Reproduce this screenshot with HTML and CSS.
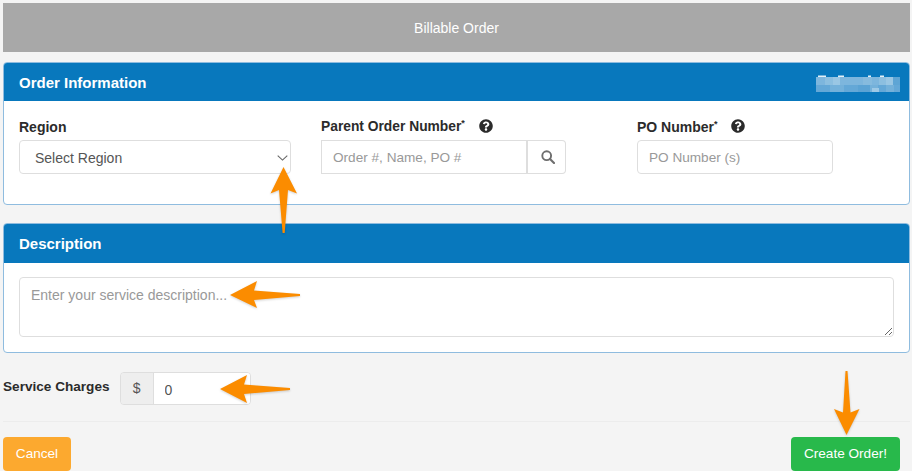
FILE: index.html
```html
<!DOCTYPE html>
<html lang="en">
<head>
<meta charset="utf-8">
<title>Billable Order</title>
<link rel="stylesheet" href="styles.css">
</head>
<body>
<header class="topbar">Billable Order</header>

<section class="panel panel-order">
  <div class="panel-head">
    <h2>Order Information</h2>
    <svg class="blur" width="84" height="19" viewBox="0 0 84 19" aria-hidden="true">
      <g fill="#e4f0f8"><rect x="2" y="1.5" width="8" height="1.5"/><rect x="22" y="1.5" width="6" height="1.5"/><rect x="52" y="1.5" width="3" height="1.5"/><rect x="64" y="1.5" width="4" height="1.5"/></g>
      <g fill="#7db6dd"><rect x="0" y="3" width="84" height="8"/></g>
      <g fill="#8cbfe0"><rect x="9" y="3" width="8" height="8"/><rect x="17" y="3" width="7" height="8" fill="#9ac7e4"/><rect x="47" y="3" width="9" height="8" fill="#86bbde"/><rect x="63" y="3" width="7" height="8"/><rect x="70" y="3" width="7" height="8" fill="#9ac7e4"/><rect x="77" y="3" width="7" height="8" fill="#5ea5d5"/></g>
      <g fill="#64a8d7"><rect x="0" y="11" width="84" height="7"/></g>
      <g fill="#74b1da"><rect x="14" y="11" width="14" height="7"/><rect x="42" y="11" width="12" height="7" fill="#5ba3d4"/><rect x="54" y="11" width="8" height="7"/><rect x="56" y="14" width="7" height="4" fill="#9dc9e6"/><rect x="70" y="11" width="8" height="7"/></g>
    </svg>
  </div>
  <div class="order-grid">
    <div class="field">
      <label class="label">Region</label>
      <div class="select-wrap">
        <select class="control select"><option>Select Region</option></select>
        <svg class="chevron" width="11" height="6" viewBox="0 0 11 6" aria-hidden="true"><path d="M.7.7l4.8 4.4L10.3.7" fill="none" stroke="#666" stroke-width="1.1"/></svg>
      </div>
    </div>
    <div class="field">
      <label class="label label-tight">Parent Order Number<sup>*</sup>
        <svg class="help" viewBox="0 0 512 512" aria-hidden="true"><path d="M504 256c0 136.997-111.043 248-248 248S8 392.997 8 256C8 119.083 119.043 8 256 8s248 111.083 248 248zM262.655 90c-54.497 0-89.255 22.957-116.549 63.758-3.536 5.286-2.353 12.415 2.715 16.258l34.699 26.31c5.205 3.947 12.621 3.008 16.665-2.122 17.864-22.658 30.113-35.797 57.303-35.797 20.429 0 45.698 13.148 45.698 32.958 0 14.976-12.363 22.667-32.534 33.976C247.128 238.528 216 254.941 216 296v4c0 6.627 5.373 12 12 12h56c6.627 0 12-5.373 12-12v-1.333c0-28.462 83.186-29.647 83.186-106.667 0-58.002-60.165-102-116.531-102zM256 338c-25.365 0-46 20.635-46 46 0 25.364 20.635 46 46 46s46-20.636 46-46c0-25.365-20.635-46-46-46z"/></svg>
      </label>
      <div class="search-group">
        <input class="control search-input" placeholder="Order #, Name, PO #">
        <button class="search-btn" type="button" aria-label="Search">
          <svg width="14" height="14" viewBox="0 0 14 14" aria-hidden="true"><circle cx="5.7" cy="5.7" r="4.4" fill="none" stroke="#6e6e6e" stroke-width="1.9"/><path d="M9 9l4 4" stroke="#6e6e6e" stroke-width="2.2" stroke-linecap="round"/></svg>
        </button>
      </div>
    </div>
    <div class="field">
      <label class="label">PO Number<sup>*</sup>
        <svg class="help help-po" viewBox="0 0 512 512" aria-hidden="true"><path d="M504 256c0 136.997-111.043 248-248 248S8 392.997 8 256C8 119.083 119.043 8 256 8s248 111.083 248 248zM262.655 90c-54.497 0-89.255 22.957-116.549 63.758-3.536 5.286-2.353 12.415 2.715 16.258l34.699 26.31c5.205 3.947 12.621 3.008 16.665-2.122 17.864-22.658 30.113-35.797 57.303-35.797 20.429 0 45.698 13.148 45.698 32.958 0 14.976-12.363 22.667-32.534 33.976C247.128 238.528 216 254.941 216 296v4c0 6.627 5.373 12 12 12h56c6.627 0 12-5.373 12-12v-1.333c0-28.462 83.186-29.647 83.186-106.667 0-58.002-60.165-102-116.531-102zM256 338c-25.365 0-46 20.635-46 46 0 25.364 20.635 46 46 46s46-20.636 46-46c0-25.365-20.635-46-46-46z"/></svg>
      </label>
      <input class="control po-input" placeholder="PO Number (s)">
    </div>
  </div>
</section>

<section class="panel panel-desc">
  <div class="panel-head"><h2>Description</h2></div>
  <div class="desc-body">
    <textarea class="control desc-text" placeholder="Enter your service description..."></textarea>
  </div>
</section>

<div class="charges">
  <span class="charges-label">Service Charges</span>
  <div class="money">
    <span class="money-addon">$</span>
    <input class="money-input" value="0">
  </div>
</div>

<footer class="actions">
  <button class="btn btn-cancel" type="button">Cancel</button>
  <button class="btn btn-create" type="button">Create Order!</button>
</footer>

<svg class="arrows" width="912" height="471" viewBox="0 0 912 471" aria-hidden="true">
  <path d="M283.5 167L297 193.5L288 190L284.7 233H282.6L279 190L270.5 193.5Z"/>
  <path d="M230 295L257 281L254 290.5L300 294V296L254 300L257 308Z"/>
  <path d="M220 389L247 375L244 384.5L290 388V390L244 394L247 403Z"/>
  <path d="M846.5 435L834 409L843 412.5L845.5 371H847.5L850.5 412.5L859.5 409Z"/>
</svg>
</body>
</html>
```

FILE: styles.css
```css
* { box-sizing: border-box; }

html, body { height: 100%; }

body {
  position: relative;
  margin: 0;
  padding: 3px 2px 0 3px;
  overflow: hidden;
  background: #f4f4f4;
  color: #333;
  font: 14px/20px "Liberation Sans", Arial, sans-serif;
}

.topbar {
  height: 49px;
  background: #a8a8a8;
  color: #fff;
  display: flex;
  align-items: center;
  justify-content: center;
}

.panel {
  background: #fff;
  border: 1px solid #8fbcdf;
  border-radius: 4px;
  overflow: hidden;
}

.panel-order { height: 143px; margin-top: 10px; }
.panel-desc { height: 130px; margin-top: 18px; }

.panel-head {
  height: 38px;
  padding: 1px 9px 0 15px;
  background: #0878bd;
  color: #fff;
  display: flex;
  align-items: center;
  justify-content: space-between;
}

.panel-desc .panel-head { height: 39px; }

.panel-head h2 {
  margin: 0;
  font-size: 15px;
  font-weight: 700;
  line-height: 20px;
}

.blur { display: block; margin-top: 2px; }

.order-grid {
  display: grid;
  grid-template-columns: 302px 316px 1fr;
  padding: 16px 15px 0;
}

.label {
  display: block;
  height: 20px;
  margin-bottom: 3px;
  color: #2b2b2b;
  font-weight: 700;
  white-space: nowrap;
}

.label-tight { font-size: 13.8px; }

.label sup {
  font-size: 9px;
  line-height: 0;
  vertical-align: 5px;
}

.help {
  width: 14px;
  height: 14px;
  margin-left: 10px;
  vertical-align: -2px;
  fill: #2b2b2b;
}

.help-po { vertical-align: -1px; }

.control {
  display: block;
  height: 34px;
  padding: 7px 11px 6px;
  border: 1px solid #dedede;
  border-radius: 4px;
  background: #fff;
  color: #555;
  font: inherit;
  outline: 0;
}

.control::placeholder { color: #999; opacity: 1; }

.select-wrap { position: relative; width: 272px; }

.select {
  width: 100%;
  padding-left: 15px;
  appearance: none;
  -webkit-appearance: none;
}

.chevron { position: absolute; top: 15px; right: 3px; }

.search-group { display: flex; width: 245px; }

.search-input {
  width: 207px;
  border-radius: 0;
  border-right-width: 2px;
  font-size: 13.6px;
}

.search-btn {
  flex: 1;
  padding: 0 0 0 2px;
  border: 1px solid #dedede;
  border-left: 0;
  border-radius: 0 4px 4px 0;
  background: #fff;
  display: flex;
  align-items: center;
  justify-content: center;
}

.po-input { width: 196px; font-size: 13.6px; }

.desc-body { padding: 14px 15px 15px; }

.desc-text {
  width: 100%;
  height: 60px;
  resize: vertical;
}

.charges {
  display: flex;
  align-items: center;
  gap: 10px;
  height: 33px;
  margin-top: 19px;
}

.charges-label { color: #2b2b2b; font-size: 13.6px; font-weight: 700; margin-top: -4px; }

.money {
  display: flex;
  width: 131px;
  height: 33px;
  border: 1px solid #dedede;
  border-radius: 4px;
  overflow: hidden;
}

.money-addon {
  width: 33px;
  flex: none;
  background: #eee;
  border-right: 1px solid #dedede;
  color: #555;
  text-align: center;
  line-height: 31px;
}

.money-input {
  width: 100%;
  min-width: 0;
  padding: 2px 11px 0;
  border: 0;
  background: #fff;
  color: #555;
  font: inherit;
  outline: 0;
}

.actions {
  display: flex;
  justify-content: space-between;
  height: 50px;
  margin-top: 16px;
  padding: 15px 10px 0 0;
  border-top: 1px solid #ececec;
}

.btn {
  height: 34px;
  border: 1px solid transparent;
  border-radius: 4px;
  color: #fff;
  font: 13.6px/20px "Liberation Sans", Arial, sans-serif;
  padding: 0;
}

.btn-cancel { width: 68px; background: #fca92f; }
.btn-create { width: 109px; background: #28b94b; }

.arrows {
  position: absolute;
  top: 0;
  left: 0;
  pointer-events: none;
  fill: #fb8c00;
  filter: drop-shadow(0 1px 1px rgba(0, 0, 0, .18));
}
```
